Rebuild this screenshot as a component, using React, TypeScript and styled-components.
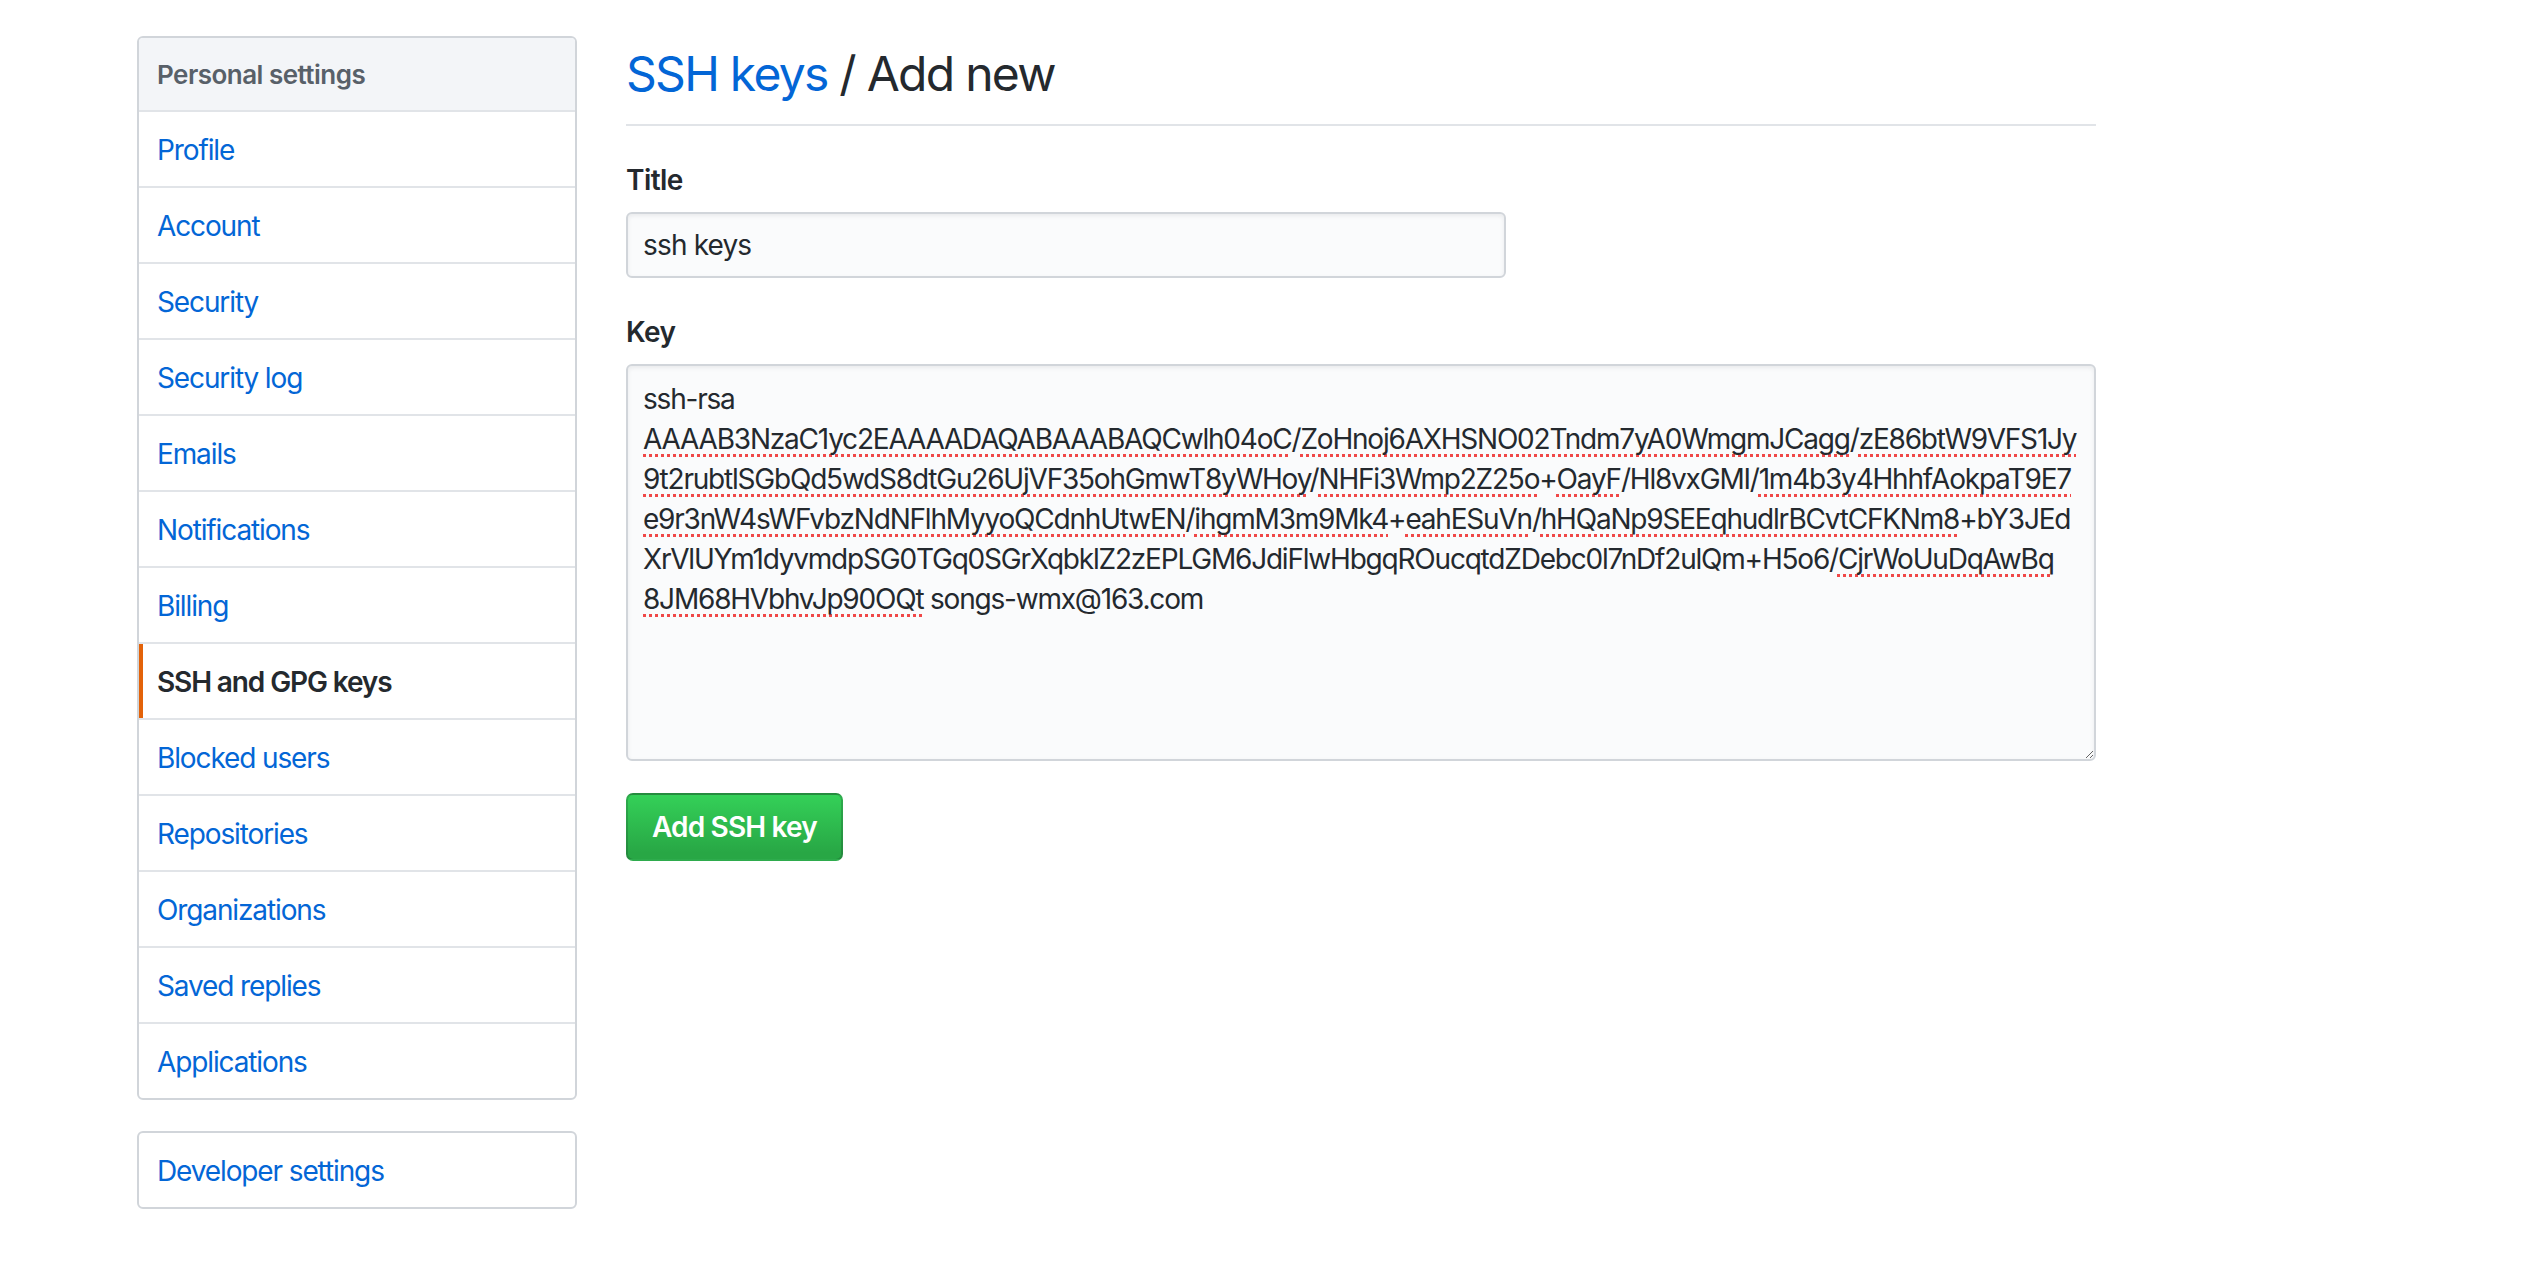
import styled, { createGlobalStyle } from "styled-components";

const GlobalStyle = createGlobalStyle`
  * {
    box-sizing: border-box;
  }

  body {
    margin: 0;
    background: #fff;
    color: #24292e;
    font-family: Inter, "Noto Sans", sans-serif;
    letter-spacing: -0.03em;
  }
`;

const Page = styled.div`
  display: flex;
  align-items: flex-start;
  padding: 36px 0 0 137px;
`;

const Sidebar = styled.nav`
  display: flex;
  flex: none;
  flex-direction: column;
  gap: 31px;
  margin-right: 49px;
  width: 440px;
`;

const Menu = styled.div`
  background: #fff;
  border: 2px solid #d1d5da;
  border-radius: 6px;
  overflow: hidden;
`;

const MenuHeading = styled.h3`
  align-items: center;
  background: #f3f5f8;
  border-bottom: 2px solid #e1e4e8;
  color: #586069;
  display: flex;
  font-size: 26px;
  font-weight: 600;
  height: 74px;
  letter-spacing: -0.02em;
  margin: 0;
  padding: 0 18px;
`;

const MenuItem = styled.a<{ selected?: boolean }>`
  align-items: center;
  color: ${({ selected }) => (selected ? "#24292e" : "#0366d6")};
  display: flex;
  font-size: 28px;
  font-weight: ${({ selected }) => (selected ? 600 : 400)};
  height: 74px;
  letter-spacing: -0.04em;
  padding: 2px 18px 0;
  position: relative;
  text-decoration: none;

  & + & {
    border-top: 2px solid #e1e4e8;
    height: 76px;
  }

  &::before {
    background: #e36209;
    bottom: 0;
    content: "";
    display: ${({ selected }) => (selected ? "block" : "none")};
    left: 0;
    position: absolute;
    top: 0;
    width: 4px;
  }
`;

const Main = styled.main`
  flex: none;
  width: 1470px;
`;

const Subhead = styled.h2`
  border-bottom: 2px solid #e1e4e8;
  font-size: 48px;
  font-weight: 400;
  letter-spacing: -0.036em;
  line-height: 60px;
  margin: 8px 0 0;
  padding-bottom: 20px;
`;

const SubheadLink = styled.a`
  color: #0366d6;
  text-decoration: none;
`;

const FormGroup = styled.div`
  margin-top: 34px;
`;

const Label = styled.label`
  display: block;
  font-size: 28px;
  font-weight: 600;
  letter-spacing: -0.02em;
  line-height: 40px;
  margin-bottom: 12px;
`;

const fieldStyle = `
  background: #fafbfc;
  border: 2px solid #d1d5da;
  border-radius: 6px;
  box-shadow: inset 0 2px 4px rgba(27, 31, 35, 0.075);
  color: #24292e;
  font-family: Inter, "Noto Sans", sans-serif;
  font-size: 28px;
  outline: none;
`;

const TextInput = styled.input`
  ${fieldStyle}
  display: block;
  height: 66px;
  letter-spacing: -0.03em;
  padding: 0 15px;
  width: 880px;
`;

const KeyArea = styled.div`
  ${fieldStyle}
  height: 397px;
  letter-spacing: -0.043em;
  line-height: 40px;
  overflow: auto;
  padding: 13px 15px 10px;
  resize: vertical;
  white-space: pre;
  width: 100%;
`;

const KeyLine = styled.div``;

const Misspelled = styled.span`
  text-decoration: underline dotted #f04848;
  text-decoration-skip-ink: none;
  text-decoration-thickness: 3px;
  text-underline-offset: 5px;
`;

const PrimaryButton = styled.button`
  background-color: #28a745;
  background-image: linear-gradient(-180deg, #34d058 0%, #28a745 90%);
  border: 2px solid rgba(27, 31, 35, 0.2);
  border-radius: 7px;
  color: #fff;
  cursor: pointer;
  display: block;
  font-family: Inter, "Noto Sans", sans-serif;
  font-size: 28px;
  font-weight: 600;
  letter-spacing: -0.03em;
  line-height: 40px;
  margin-top: 32px;
  padding: 12px 24px;
`;

const personalItems = [
  "Profile",
  "Account",
  "Security",
  "Security log",
  "Emails",
  "Notifications",
  "Billing",
  "SSH and GPG keys",
  "Blocked users",
  "Repositories",
  "Organizations",
  "Saved replies",
  "Applications",
];

type Seg = [string, boolean?];

const keyLines: Seg[][] = [
  [["ssh-rsa"]],
  [
    ["AAAAB3NzaC1yc2EAAAADAQABAAABAQCwlh04oC", true],
    ["/"],
    ["ZoHnoj6AXHSNO02Tndm7yA0WmgmJCagg", true],
    ["/"],
    ["zE86btW9VFS1Jy", true],
  ],
  [
    ["9t2rubtlSGbQd5wdS8dtGu26UjVF35ohGmwT8yWHoy", true],
    ["/"],
    ["NHFi3Wmp2Z25o", true],
    ["+"],
    ["OayF", true],
    ["/Hl8vxGMI/"],
    ["1m4b3y4HhhfAokpaT9E7", true],
  ],
  [
    ["e9r3nW4sWFvbzNdNFlhMyyoQCdnhUtwEN", true],
    ["/"],
    ["ihgmM3m9Mk4", true],
    ["+"],
    ["eahESuVn", true],
    ["/"],
    ["hHQaNp9SEEqhudlrBCvtCFKNm8", true],
    ["+bY3JEd"],
  ],
  [
    ["XrVlUYm1dyvmdpSG0TGq0SGrXqbklZ2zEPLGM6JdiFlwHbgqROucqtdZDebc0l7nDf2ulQm+H5o6/"],
    ["CjrWoUuDqAwBq", true],
  ],
  [["8JM68HVbhvJp90OQt", true], [" songs-wmx@163.com"]],
];

const App = () => {
  return (
    <>
      <GlobalStyle />
      <Page>
        <Sidebar>
          <Menu>
            <MenuHeading>Personal settings</MenuHeading>
            {personalItems.map((item) => (
              <MenuItem key={item} href="#" selected={item === "SSH and GPG keys"}>
                {item}
              </MenuItem>
            ))}
          </Menu>
          <Menu>
            <MenuItem href="#">Developer settings</MenuItem>
          </Menu>
        </Sidebar>

        <Main>
          <Subhead>
            <SubheadLink href="#">SSH keys</SubheadLink> / Add new
          </Subhead>
          <FormGroup>
            <Label htmlFor="key-title">Title</Label>
            <TextInput id="key-title" defaultValue="ssh keys" />
          </FormGroup>
          <FormGroup>
            <Label>Key</Label>
            <KeyArea
              role="textbox"
              aria-multiline="true"
              contentEditable
              spellCheck={false}
              suppressContentEditableWarning
            >
              {keyLines.map((line, i) => (
                <KeyLine key={i}>
                  {line.map(([text, bad], j) =>
                    bad ? <Misspelled key={j}>{text}</Misspelled> : <span key={j}>{text}</span>
                  )}
                </KeyLine>
              ))}
            </KeyArea>
          </FormGroup>
          <PrimaryButton type="button">Add SSH key</PrimaryButton>
        </Main>
      </Page>
    </>
  );
};

export default App;
